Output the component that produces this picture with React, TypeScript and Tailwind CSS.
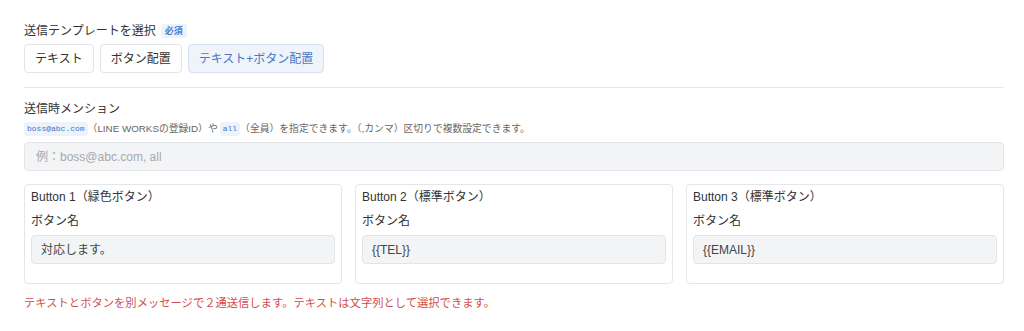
const templates = [
    { label: "テキスト", active: false },
    { label: "ボタン配置", active: false },
    { label: "テキスト+ボタン配置", active: true },
];

const buttons = [
    { title: "Button 1", note: "（緑色ボタン）", value: "対応します。" },
    { title: "Button 2", note: "（標準ボタン）", value: "{{TEL}}" },
    { title: "Button 3", note: "（標準ボタン）", value: "{{EMAIL}}" },
];

const font = { fontFamily: '"Liberation Sans", "Noto Sans CJK JP", sans-serif' };

export default function App() {
    return (
        <main
            className="h-[331px] w-full bg-white pl-6 pr-5 pt-[22px] text-[#333]"
            style={font}
        >

            {/* Template select */}
            <div className="flex h-[18px] items-center gap-[5px]">
                <span className="text-[12px] leading-[18px]">送信テンプレートを選択</span>
                <span className="rounded-[3px] bg-[#eef3fb] px-[4px] text-[9px] font-semibold leading-[14px] text-[#4a7ed1]">
                    必須
                </span>
            </div>

            <div className="mt-1 flex gap-[6px]">
                {templates.map((t) => (
                    <button
                        key={t.label}
                        className={
                            t.active
                                ? "h-[29px] rounded-[4px] border border-[#d9e1ee] bg-[#eff3fa] px-[10px] text-[12px] text-[#4a78c4]"
                                : "h-[29px] rounded-[4px] border border-[#e3e5e8] bg-white px-[10px] text-[12px] text-[#333]"
                        }
                    >
                        {t.label}
                    </button>
                ))}
            </div>

            <div className="mt-[14px] border-t border-[#e6e7ea]" />

            {/* Mention */}
            <p className="mt-[12px] text-[12px] leading-[18px]">送信時メンション</p>

            <p className="mt-[4px] flex items-center text-[9.8px] leading-[14px] text-[#666]">
                <code className="rounded-[3px] bg-[#eef3fb] px-[3px] font-['Liberation_Mono',monospace] text-[8px] text-[#3f73c6]">
                    boss@abc.com
                </code>
                <span>（LINE WORKSの登録ID）や</span>
                <code className="ml-[2px] rounded-[3px] bg-[#eef3fb] px-[3px] font-['Liberation_Mono',monospace] text-[8px] text-[#3f73c6]">
                    all
                </code>
                <span>（全員）を指定できます。（,カンマ）区切りで複数設定できます。</span>
            </p>

            <div className="mt-[6px] flex h-[29px] items-center rounded-[4px] border border-[#e2e4e8] bg-[#f3f4f6] px-[11px] text-[12px] text-[#a6a9ae]">
                例：boss@abc.com, all
            </div>

            {/* Buttons */}
            <div className="mt-[13px] grid grid-cols-3 gap-[13px]">
                {buttons.map((b) => (
                    <div
                        key={b.title}
                        className="rounded-[4px] border border-[#e4e6e9] px-[6px] pb-[19px] pt-[3px]"
                    >
                        <p className="text-[12px] leading-[18px]">
                            <span className="font-medium">{b.title}</span>
                            <span>{b.note}</span>
                        </p>
                        <p className="mt-[6px] text-[12px] leading-[18px]">ボタン名</p>
                        <div className="mt-[5px] flex h-[29px] items-center rounded-[4px] border border-[#e2e4e8] bg-[#f3f4f6] px-[9px] text-[12px] text-[#444]">
                            {b.value}
                        </div>
                    </div>
                ))}
            </div>

            <p className="mt-[11px] text-[11.3px] leading-[16px] text-[#d44d4d]">
                テキストとボタンを別メッセージで２通送信します。テキストは文字列として選択できます。
            </p>

        </main>
    );
}
